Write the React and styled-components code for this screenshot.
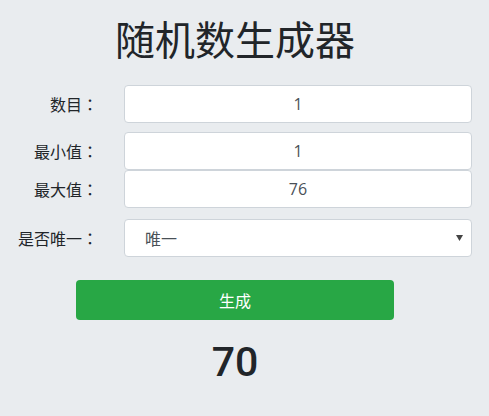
import React, { useState } from 'react';
import styled, { createGlobalStyle } from 'styled-components';

const GlobalStyle = createGlobalStyle`
  html, body {
    margin: 0;
    padding: 0;
    background: #e9ecef;
  }
  body {
    font-family: "Open Sans", "Noto Sans CJK SC", sans-serif;
    color: #212529;
  }
`;

const Page = styled.div`
  width: 470px;
  min-height: 416px;
  padding-top: 10px;
  box-sizing: border-box;
`;

const Title = styled.h1`
  margin: 0 0 19px;
  font-family: "Noto Sans CJK SC", sans-serif;
  font-size: 40px;
  font-weight: 400;
  line-height: 56px;
  text-align: center;
  color: #212529;
`;

const Form = styled.div`
  display: grid;
  grid-template-columns: 98px 348px;
  column-gap: 26px;
  align-items: center;
`;

const Label = styled.label`
  font-family: "Noto Sans CJK SC", sans-serif;
  font-size: 16px;
  text-align: right;
  text-spacing-trim: space-all;
  color: #212529;
  margin-top: ${p => p.$gap || 0}px;
`;

const Colon = styled.span`
  font-family: "Noto Sans CJK TC", sans-serif;
`;

const Input = styled.input`
  box-sizing: border-box;
  width: 100%;
  height: 38px;
  margin-top: ${p => p.$gap || 0}px;
  padding: 0 12px;
  border: 1px solid #ced4da;
  border-radius: 4px;
  background: #fff;
  font-family: "Open Sans", "Noto Sans CJK SC", sans-serif;
  font-size: 16px;
  color: #495057;
  text-align: center;
  outline: none;
`;

const SelectWrap = styled.div`
  position: relative;
  margin-top: ${p => p.$gap || 0}px;
`;

const Select = styled.select`
  box-sizing: border-box;
  width: 100%;
  height: 38px;
  padding: 0 30px 0 20px;
  border: 1px solid #ced4da;
  border-radius: 4px;
  background: #fff;
  font-family: "Noto Sans CJK SC", sans-serif;
  font-size: 16px;
  color: #495057;
  appearance: none;
  -webkit-appearance: none;
  outline: none;
`;

const Caret = styled.svg`
  position: absolute;
  right: 9px;
  top: 16px;
  pointer-events: none;
`;

const Button = styled.button`
  display: block;
  box-sizing: border-box;
  width: 318px;
  height: 40px;
  margin: 23px 0 0 76px;
  border: none;
  border-radius: 4px;
  background: #28a745;
  color: #fff;
  font-family: "Noto Sans CJK SC", sans-serif;
  font-size: 16px;
  cursor: pointer;
`;

const Result = styled.div`
  margin-top: 18px;
  text-align: center;
  font-family: Roboto, "Liberation Sans", sans-serif;
  font-size: 41px;
  font-weight: 500;
  line-height: 48px;
  color: #212529;
`;

export default function App() {
  const [count, setCount] = useState('1');
  const [min, setMin] = useState('1');
  const [max, setMax] = useState('76');
  const [unique, setUnique] = useState('unique');
  const [result, setResult] = useState('70');

  const generate = () => {
    const n = Math.max(1, parseInt(count, 10) || 1);
    const lo = parseInt(min, 10) || 0;
    const hi = parseInt(max, 10) || 0;
    const out = [];
    let tries = 0;
    while (out.length < n && tries < 10000) {
      tries++;
      const v = lo + Math.floor(Math.random() * (hi - lo + 1));
      if (unique === 'unique' && out.includes(v)) continue;
      out.push(v);
    }
    setResult(out.join(', '));
  };

  return (
    <>
      <GlobalStyle />
      <Page>
        <Title>随机数生成器</Title>
        <Form>
          <Label>数目<Colon>：</Colon></Label>
          <Input value={count} onChange={e => setCount(e.target.value)} />

          <Label $gap={9}>最小值<Colon>：</Colon></Label>
          <Input $gap={9} value={min} onChange={e => setMin(e.target.value)} />

          <Label>最大值<Colon>：</Colon></Label>
          <Input value={max} onChange={e => setMax(e.target.value)} />

          <Label $gap={11}>是否唯一<Colon>：</Colon></Label>
          <SelectWrap $gap={11}>
            <Select value={unique} onChange={e => setUnique(e.target.value)}>
              <option value="unique">唯一</option>
              <option value="repeat">可重复</option>
            </Select>
            <Caret width="7" height="6" viewBox="0 0 7 6">
              <path d="M0 0 L7 0 L3.5 6 Z" fill="#444" />
            </Caret>
          </SelectWrap>
        </Form>
        <Button onClick={generate}>生成</Button>
        <Result>{result}</Result>
      </Page>
    </>
  );
}
